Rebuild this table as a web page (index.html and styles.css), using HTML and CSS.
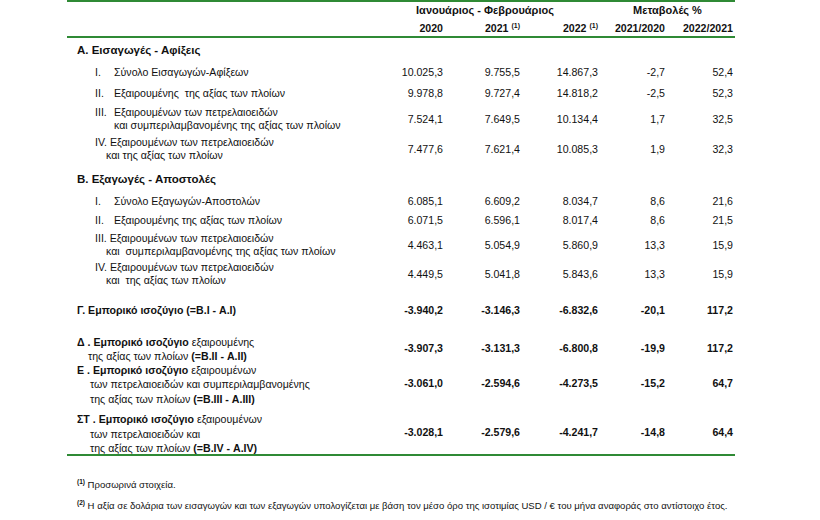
FILE: index.html
```html
<!DOCTYPE html>
<html lang="el">
<head>
    <meta charset="UTF-8">
    <title>Εμπορικό ισοζύγιο - Ιανουάριος - Φεβρουάριος</title>
    <link rel="stylesheet" href="styles.css">
</head>
<body>
    <div class="report">
        <div class="tbl">
            <div class="row head-top">
                <div></div>
                <div class="period">Ιανουάριος - Φεβρουάριος</div>
                <div class="change">Μεταβολές %</div>
            </div>
            <div class="row head-years">
                <div></div>
                <div class="val">2020</div>
                <div class="val">2021 <sup>(1)</sup></div>
                <div class="val">2022 <sup>(1)</sup></div>
                <div class="val">2021/2020</div>
                <div class="val">2022/2021</div>
            </div>

            <!-- A. imports -->
            <div class="row sec h24">
                <div class="lbl">Α. Εισαγωγές - Αφίξεις</div>
            </div>
            <div class="row h20">
                <div class="lbl item"><span class="num">I.</span><span>Σύνολο Εισαγωγών-Αφίξεων</span></div>
                <div class="val">10.025,3</div>
                <div class="val">9.755,5</div>
                <div class="val">14.867,3</div>
                <div class="val">-2,7</div>
                <div class="val">52,4</div>
            </div>
            <div class="row h22">
                <div class="lbl item"><span class="num">II.</span><span>Εξαιρουμένης&nbsp; της αξίας των πλοίων</span></div>
                <div class="val">9.978,8</div>
                <div class="val">9.727,4</div>
                <div class="val">14.818,2</div>
                <div class="val">-2,5</div>
                <div class="val">52,3</div>
            </div>
            <div class="row h30">
                <div class="lbl item"><span class="num">III.</span><span>Εξαιρουμένων των πετρελαιοειδών<br>και συμπεριλαμβανομένης της αξίας των πλοίων</span></div>
                <div class="val">7.524,1</div>
                <div class="val">7.649,5</div>
                <div class="val">10.134,4</div>
                <div class="val">1,7</div>
                <div class="val">32,5</div>
            </div>
            <div class="row h30">
                <div class="lbl item"><span>IV. Εξαιρουμένων των πετρελαιοειδών<br><span class="cont">και της αξίας των πλοίων</span></span></div>
                <div class="val">7.477,6</div>
                <div class="val">7.621,4</div>
                <div class="val">10.085,3</div>
                <div class="val">1,9</div>
                <div class="val">32,3</div>
            </div>

            <!-- B. exports -->
            <div class="row sec sec-gap h24">
                <div class="lbl">Β. Εξαγωγές - Αποστολές</div>
            </div>
            <div class="row h20">
                <div class="lbl item"><span class="num">I.</span><span>Σύνολο Εξαγωγών-Αποστολών</span></div>
                <div class="val">6.085,1</div>
                <div class="val">6.609,2</div>
                <div class="val">8.034,7</div>
                <div class="val">8,6</div>
                <div class="val">21,6</div>
            </div>
            <div class="row h18">
                <div class="lbl item"><span class="num">II.</span><span>Εξαιρουμένης της αξίας των πλοίων</span></div>
                <div class="val">6.071,5</div>
                <div class="val">6.596,1</div>
                <div class="val">8.017,4</div>
                <div class="val">8,6</div>
                <div class="val">21,5</div>
            </div>
            <div class="row h32">
                <div class="lbl item"><span>III. Εξαιρουμένων των πετρελαιοειδών<br><span class="cont">και&nbsp; συμπεριλαμβανομένης της αξίας των πλοίων</span></span></div>
                <div class="val">4.463,1</div>
                <div class="val">5.054,9</div>
                <div class="val">5.860,9</div>
                <div class="val">13,3</div>
                <div class="val">15,9</div>
            </div>
            <div class="row h26">
                <div class="lbl item"><span>IV. Εξαιρουμένων των πετρελαιοειδών<br><span class="cont">και&nbsp; της αξίας των πλοίων</span></span></div>
                <div class="val">4.449,5</div>
                <div class="val">5.041,8</div>
                <div class="val">5.843,6</div>
                <div class="val">13,3</div>
                <div class="val">15,9</div>
            </div>

            <!-- balances -->
            <div class="row bal h46">
                <div class="lbl"><b>Γ. Εμπορικό ισοζύγιο (=Β.I - Α.I)</b></div>
                <div class="val">-3.940,2</div>
                <div class="val">-3.146,3</div>
                <div class="val">-6.832,6</div>
                <div class="val">-20,1</div>
                <div class="val">117,2</div>
            </div>
            <div class="row bal h24">
                <div class="lbl two"><b>Δ . Εμπορικό ισοζύγιο</b> εξαιρουμένης<br><span class="cont-d">της αξίας των πλοίων <b>(=Β.II - Α.II)</b></span></div>
                <div class="val">-3.907,3</div>
                <div class="val">-3.131,3</div>
                <div class="val">-6.800,8</div>
                <div class="val">-19,9</div>
                <div class="val">117,2</div>
            </div>
            <div class="row bal h52">
                <div class="lbl three"><b>Ε . Εμπορικό ισοζύγιο</b> εξαιρουμένων<br><span class="cont-e">των πετρελαιοειδών και συμπεριλαμβανομένης</span><br><span class="cont-e">της αξίας των πλοίων <b>(=Β.III - Α.III)</b></span></div>
                <div class="val">-3.061,0</div>
                <div class="val">-2.594,6</div>
                <div class="val">-4.273,5</div>
                <div class="val">-15,2</div>
                <div class="val">64,7</div>
            </div>
            <div class="row bal h45">
                <div class="lbl three"><b>ΣΤ . Εμπορικό ισοζύγιο</b> εξαιρουμένων<br><span class="cont-e">των πετρελαιοειδών και</span><br><span class="cont-e">της αξίας των πλοίων <b>(=Β.IV - Α.IV)</b></span></div>
                <div class="val">-3.028,1</div>
                <div class="val">-2.579,6</div>
                <div class="val">-4.241,7</div>
                <div class="val">-14,8</div>
                <div class="val">64,4</div>
            </div>
        </div>

        <div class="notes">
            <p><sup>(1)</sup> Προσωρινά στοιχεία.</p>
            <p><sup>(2)</sup> Η αξία σε δολάρια των εισαγωγών και των εξαγωγών υπολογίζεται με βάση τον μέσο όρο της ισοτιμίας USD / € του μήνα αναφοράς στο αντίστοιχο έτος.</p>
        </div>
    </div>
</body>
</html>
```

FILE: styles.css
```css
:root {
    --green: #2f8a35;
    --text: #111111;
}

* {
    margin: 0;
    padding: 0;
    box-sizing: border-box;
}

body {
    font-family: 'Liberation Sans', Arial, sans-serif;
    font-size: 10.6px;
    color: var(--text);
    background: #ffffff;
}

.report {
    margin-left: 67px;
    width: 668px;
}

.tbl {
    border-top: 2px solid var(--green);
    border-bottom: 2px solid var(--green);
}

.row {
    display: grid;
    grid-template-columns: 313px 65px 77px 78px 67px 68px;
    align-items: center;
    line-height: 13px;
}

.val {
    text-align: right;
    padding-right: 2px;
}

/* header */
.head-top {
    height: 17px;
    font-weight: 700;
    font-size: 11px;
}

.period {
    grid-column: 2 / span 3;
    text-align: center;
    padding-right: 10px;
}

.change {
    grid-column: 5 / span 2;
    text-align: center;
}

.head-years {
    height: 19px;
    font-weight: 700;
    align-items: end;
    padding-bottom: 1px;
    border-bottom: 2px solid var(--green);
}

sup {
    font-size: 7px;
    vertical-align: 4px;
    line-height: 0;
}

/* labels */
.lbl {
    padding-left: 10px;
}

.sec .lbl {
    font-weight: 700;
    font-size: 11.5px;
}

.sec-gap {
    height: 27px !important;
    padding-top: 3px;
}

.item {
    display: flex;
    padding-left: 28px;
}

.num {
    flex: none;
    width: 19px;
}

.cont {
    padding-left: 11px;
}

.cont-d {
    padding-left: 11px;
}

.cont-e {
    padding-left: 13px;
}

.bal .val {
    font-weight: 700;
}

.bal .two {
    line-height: 13.5px;
    padding-top: 3px;
}

.bal .three {
    line-height: 14.5px;
    padding-top: 3px;
}

.h18 { height: 18px; }
.h20 { height: 20px; }
.h22 { height: 22px; }
.h24 { height: 24px; }
.h26 { height: 26px; }
.h30 { height: 30px; }
.h32 { height: 32px; }
.h45 { height: 45px; }
.h46 { height: 46px; }
.h52 { height: 52px; }

/* footnotes */
.notes {
    padding-left: 10px;
    margin-top: 22px;
    font-size: 9.55px;
    line-height: 14px;
}

.notes p + p {
    margin-top: 7px;
}

.notes sup {
    font-weight: 700;
    font-size: 6.5px;
}
```
